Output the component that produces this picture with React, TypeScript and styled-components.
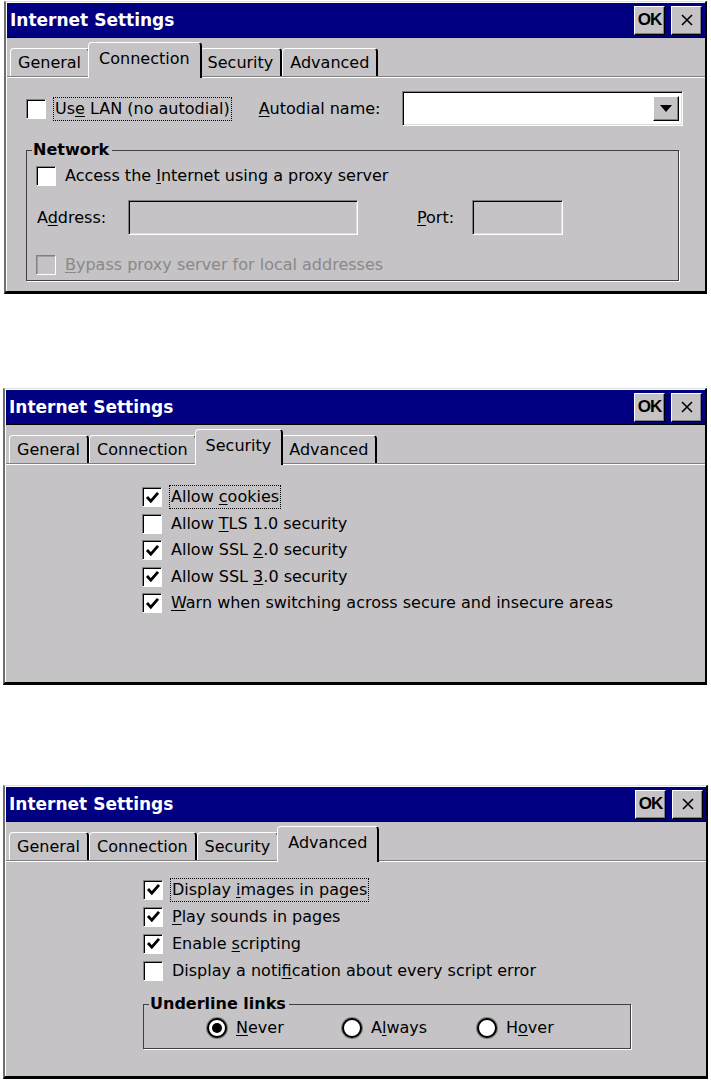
import styled, { createGlobalStyle } from "styled-components";

const Global = createGlobalStyle`
  html, body { margin: 0; padding: 0; background: #fff; }
  body {
    font-family: "DejaVu Sans", "Noto Sans", sans-serif;
    font-size: 16px;
    color: #000;
  }
`;

const FACE = "#c5c3c6";

const Page = styled.div`
  width: 711px;
  height: 1081px;
  display: flex;
  flex-direction: column;
`;

const Window = styled.div<{ $top: number; $left: number; $width: number; $height: number }>`
  margin-top: ${p => p.$top}px;
  margin-left: ${p => p.$left}px;
  width: ${p => p.$width}px;
  height: ${p => p.$height}px;
  box-sizing: border-box;
  background: ${FACE};
  border-style: solid;
  border-width: 1px 2px 3px 2px;
  border-color: #dedede #000 #000 #6e6e6e;
  box-shadow: inset 1px 1px 0 #fff;
  padding: 1px 0 0 1px;
  display: flex;
  flex-direction: column;
`;

const TitleBar = styled.div`
  height: 34px;
  flex: none;
  background: #000080;
  border-bottom: 1px solid #000;
  display: flex;
  align-items: center;
  padding: 0 3px 0 3px;
  gap: 6px;
`;

const Title = styled.div`
  flex: 1;
  color: #fff;
  font-weight: bold;
  font-size: 17px;
`;

const CapButton = styled.div`
  width: 31px;
  height: 29px;
  box-sizing: border-box;
  background: ${FACE};
  border: 1px solid;
  border-color: #fff #000 #000 #fff;
  box-shadow: inset -1px -1px 0 #808080;
  display: flex;
  align-items: center;
  justify-content: center;
  font-family: "Liberation Sans", sans-serif;
  font-weight: bold;
  font-size: 17px;
  letter-spacing: -1px;
`;

const TabStrip = styled.div`
  height: 38px;
  flex: none;
  display: flex;
  align-items: flex-end;
  padding-left: 3px;
  border-bottom: 1px solid #808080;
  box-shadow: 0 1px 0 #fff;
`;

const Tab = styled.div<{ $active?: boolean }>`
  height: ${p => (p.$active ? 36 : 28)}px;
  padding: ${p => (p.$active ? "0 10px 5px" : "0 7px")};
  margin: 0 ${p => (p.$active ? "-2px -2px -2px" : "0 0 0")};
  box-sizing: border-box;
  border-style: solid;
  border-width: 1px 2px 0 1px;
  border-color: #fff #000 transparent #fff;
  border-radius: 4px 4px 0 0;
  background: ${FACE};
  display: flex;
  align-items: center;
  position: relative;
  z-index: ${p => (p.$active ? 1 : 0)};
  white-space: nowrap;
`;

const Body = styled.div<{ $pad: string }>`
  flex: 1;
  padding: ${p => p.$pad};
  display: flex;
  flex-direction: column;
`;

const Row = styled.div<{ $gap?: number; $h?: number }>`
  display: flex;
  align-items: center;
  gap: ${p => p.$gap ?? 8}px;
  height: ${p => (p.$h ? `${p.$h}px` : "auto")};
  flex: none;
  white-space: nowrap;
`;

const Box = styled.div<{ $disabled?: boolean }>`
  width: 20px;
  height: 20px;
  flex: none;
  box-sizing: border-box;
  background: ${p => (p.$disabled ? FACE : "#fff")};
  border: 1px solid;
  border-color: #808080 #fff #fff #808080;
  box-shadow: inset 1px 1px 0 ${p => (p.$disabled ? "#a0a0a0" : "#000")};
  display: flex;
  align-items: center;
  justify-content: center;
`;

const Radio = styled.div<{ $on?: boolean }>`
  width: 20px;
  height: 20px;
  flex: none;
  box-sizing: border-box;
  border-radius: 50%;
  background: #fff;
  border: 2px solid #000;
  box-shadow: 0 0 0 1px #808080;
  display: flex;
  align-items: center;
  justify-content: center;
  &::after {
    content: "";
    display: ${p => (p.$on ? "block" : "none")};
    width: 10px;
    height: 10px;
    border-radius: 50%;
    background: #000;
  }
`;

const Label = styled.span<{ $disabled?: boolean; $focus?: boolean }>`
  color: ${p => (p.$disabled ? "#8a888a" : "#000")};
  outline: ${p => (p.$focus ? "1px dotted #000" : "none")};
  outline-offset: 0;
  padding: 0 1px;
  line-height: 22px;
`;

const Key = styled.u`
  text-decoration-thickness: 1px;
  text-underline-offset: 2px;
`;

const Field = styled.div<{ $w: number; $white?: boolean }>`
  width: ${p => p.$w}px;
  height: 35px;
  flex: none;
  box-sizing: border-box;
  background: ${p => (p.$white ? "#fff" : FACE)};
  border: 1px solid;
  border-color: #808080 #fff #fff #808080;
  box-shadow: inset 1px 1px 0 #000, inset -1px -1px 0 #dcdcdc;
  display: flex;
  justify-content: flex-end;
  align-items: center;
  padding-right: 3px;
`;

const DropButton = styled.div`
  width: 26px;
  height: 25px;
  box-sizing: border-box;
  background: ${FACE};
  border: 1px solid;
  border-color: #fff #000 #000 #fff;
  box-shadow: inset -1px -1px 0 #808080;
  display: flex;
  align-items: center;
  justify-content: center;
`;

const Group = styled.fieldset<{ $w: number; $h: number; $mt: number }>`
  margin: ${p => p.$mt}px 0 0 0;
  width: ${p => p.$w}px;
  height: ${p => p.$h}px;
  flex: none;
  box-sizing: border-box;
  border: 1px solid #404040;
  box-shadow: 1px 1px 0 #fff;
  padding: 0 9px;
  display: flex;
  flex-direction: column;
`;

const Legend = styled.legend`
  font-weight: bold;
  padding: 0 3px 0 1px;
  margin-left: -4px;
  line-height: 18px;
`;

const Spacer = styled.div<{ $h: number }>`
  height: ${p => p.$h}px;
  flex: none;
`;

const FieldLabel = styled(Label)<{ $w: number; $ml?: number }>`
  width: ${p => p.$w}px;
  margin-left: ${p => p.$ml ?? 0}px;
  flex: none;
`;

const RadioLine = styled.div`
  display: flex;
  align-items: center;
  padding: 4px 0 0 54px;
`;

const RadioItem = styled(Row)`
  width: 135px;
`;

const Check = () => (
  <svg width="15" height="15" viewBox="0 0 15 15">
    <polyline points="2,7 5.8,11.2 13,2.8" fill="none" stroke="#000" strokeWidth="2.8" />
  </svg>
);

const CheckRow = ({ on, children, focus, disabled, h = 27 }: { on?: boolean; children: React.ReactNode; focus?: boolean; disabled?: boolean; h?: number }) => (
  <Row $h={h}>
    <Box $disabled={disabled}>{on && <Check />}</Box>
    <Label $focus={focus} $disabled={disabled}>{children}</Label>
  </Row>
);

const Caption = () => (
  <TitleBar>
    <Title>Internet Settings</Title>
    <CapButton>OK</CapButton>
    <CapButton>
      <svg width="14" height="14" viewBox="0 0 14 14">
        <path d="M2 2 L12 12 M12 2 L2 12" stroke="#000" strokeWidth="1.6" />
      </svg>
    </CapButton>
  </TitleBar>
);

const TABS = ["General", "Connection", "Security", "Advanced"];

const Tabs = ({ active }: { active: number }) => (
  <TabStrip>
    {TABS.map((t, i) => (
      <Tab key={t} $active={i === active}>{t}</Tab>
    ))}
  </TabStrip>
);

export default function App() {
  return (
    <Page>
      <Global />

      <Window $top={1} $left={4} $width={703} $height={293}>
        <Caption />
        <Tabs active={1} />
        <Body $pad="14px 0 0 19px">
          <Row $gap={0}>
            <Row>
              <Box />
              <Label $focus>Us<Key>e</Key> LAN (no autodial)</Label>
            </Row>
            <FieldLabel $w={142} $ml={27}>
              <Key>A</Key>utodial name:
            </FieldLabel>
            <Field $w={281} $white>
              <DropButton>
                <svg width="12" height="8" viewBox="0 0 12 8">
                  <path d="M0 0 H12 L6 7 Z" fill="#000" />
                </svg>
              </DropButton>
            </Field>
          </Row>
          <Group $w={653} $h={140} $mt={15}>
            <Legend>Network</Legend>
            <Spacer $h={4} />
            <CheckRow h={26}>
              Access the <Key>I</Key>nternet using a proxy server
            </CheckRow>
            <Spacer $h={11} />
            <Row $gap={0}>
              <FieldLabel $w={90}>
                A<Key>d</Key>dress:
              </FieldLabel>
              <Field $w={230} />
              <FieldLabel $w={54} $ml={58}>
                <Key>P</Key>ort:
              </FieldLabel>
              <Field $w={91} />
            </Row>
            <Spacer $h={17} />
            <CheckRow disabled h={26}>
              <Key>B</Key>ypass proxy server for local addresses
            </CheckRow>
          </Group>
        </Body>
      </Window>

      <Window $top={94} $left={3} $width={704} $height={297}>
        <Caption />
        <Tabs active={2} />
        <Body $pad="20px 0 0 136px">
          <CheckRow on focus h={26.5}>Allow <Key>c</Key>ookies</CheckRow>
          <CheckRow h={26.5}>Allow <Key>T</Key>LS 1.0 security</CheckRow>
          <CheckRow on h={26.5}>Allow SSL <Key>2</Key>.0 security</CheckRow>
          <CheckRow on h={26.5}>Allow SSL <Key>3</Key>.0 security</CheckRow>
          <CheckRow on h={26.5}><Key>W</Key>arn when switching across secure and insecure areas</CheckRow>
        </Body>
      </Window>

      <Window $top={100} $left={3} $width={705} $height={294}>
        <Caption />
        <Tabs active={3} />
        <Body $pad="15px 0 0 137px">
          <CheckRow on focus>Display <Key>i</Key>mages in pages</CheckRow>
          <CheckRow on><Key>P</Key>lay sounds in pages</CheckRow>
          <CheckRow on>Enable <Key>s</Key>cripting</CheckRow>
          <CheckRow>Display a noti<Key>f</Key>ication about every script error</CheckRow>
          <Group $w={488} $h={54} $mt={11}>
            <Legend>Underline links</Legend>
            <RadioLine>
              <RadioItem>
                <Radio $on />
                <Label><Key>N</Key>ever</Label>
              </RadioItem>
              <RadioItem>
                <Radio />
                <Label>A<Key>l</Key>ways</Label>
              </RadioItem>
              <RadioItem>
                <Radio />
                <Label>H<Key>o</Key>ver</Label>
              </RadioItem>
            </RadioLine>
          </Group>
        </Body>
      </Window>
    </Page>
  );
}
